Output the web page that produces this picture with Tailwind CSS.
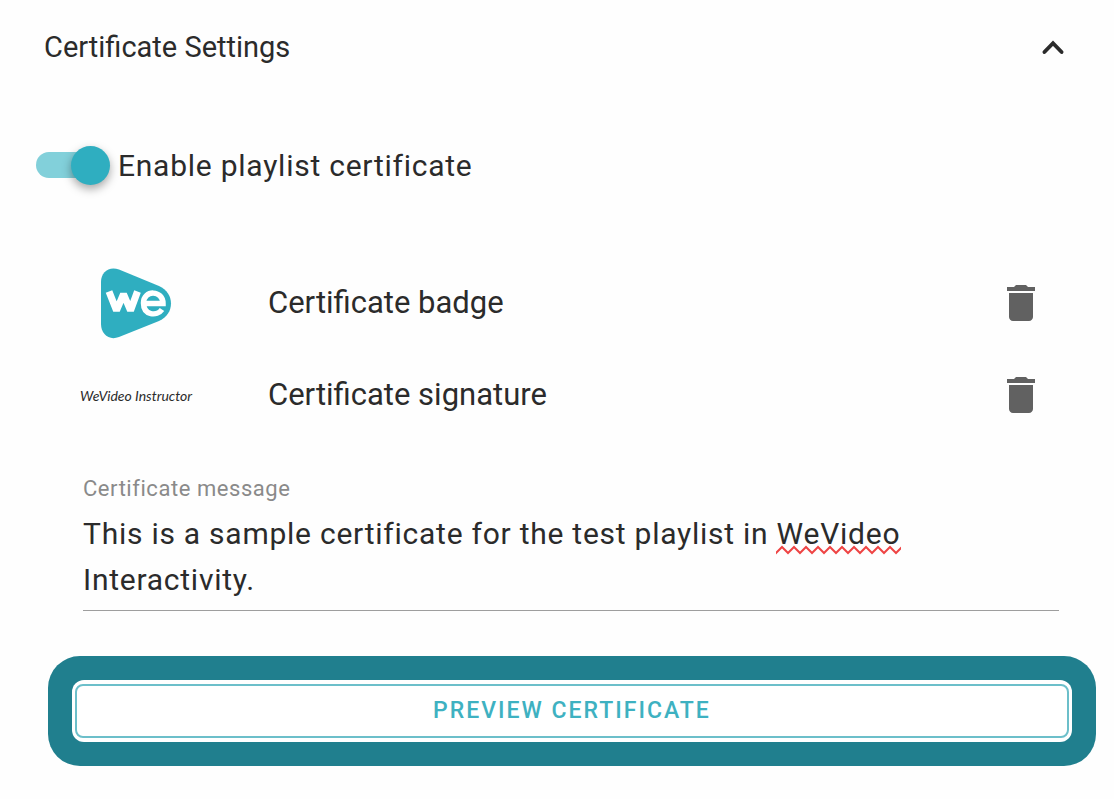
<!DOCTYPE html>
<html lang="en">

<head>
    <meta charset="UTF-8">
    <meta name="viewport" content="width=device-width, initial-scale=1.0">
    <title>Certificate Settings</title>
    <script src="https://cdn.jsdelivr.net/npm/@tailwindcss/browser@4"></script>
</head>

<body class="bg-[#fefefe] font-['Roboto',sans-serif] text-[#2b2b2b]">
    <main class="w-full">
        <!-- Panel header -->
        <header class="flex h-24 items-center justify-between pl-11 pr-10">
            <h1 class="text-[29px]">Certificate Settings</h1>
            <button type="button" aria-label="Collapse" aria-expanded="true">
                <svg class="size-[42px]" viewBox="0 0 24 24" fill="none" stroke="currentColor" stroke-width="2.2" stroke-linecap="round">
                    <path d="M7.100 14.300 12 9.300l4.900 5" />
                </svg>
            </button>
        </header>

        <!-- Toggle -->
        <div class="mt-[49px] flex h-10 items-center gap-2 pl-9">
            <input id="enable" type="checkbox" role="switch" checked
                class="relative h-[26px] w-[74px] appearance-none before:absolute before:inset-y-0 before:left-0 before:w-14 before:rounded-full before:bg-[#82d0da] after:absolute after:-top-[6px] after:right-0 after:size-[39px] after:rounded-full after:bg-[#2faec0] after:shadow-[0_4px_10px_rgba(0,0,0,0.35)]">
            <label for="enable" class="text-[30px] tracking-wide">Enable playlist certificate</label>
        </div>

        <!-- Uploaded images -->
        <ul class="mt-[72px] pl-20 pr-[69px]">
            <li class="flex h-[92px] items-center">
                <div class="flex w-[188px] pl-5">
                    <svg class="size-[72px]" viewBox="0 0 72 72" role="img" aria-label="WeVideo badge">
                        <path fill="#2faec0" d="M1 15C1 5 9-1 19 2.500L59 19C75 26 75 47 59 54L19 70C9 74 1 67 1 57Z" />
                        <path fill="none" stroke="#fff" stroke-width="7" stroke-linejoin="bevel" d="M9 24.500 16.500 43.500 23.500 27 30.500 43.500 37.500 24.500" />
                        <path fill="none" stroke="#fff" stroke-width="5.500" d="M43 36.500H63C63 23 43.500 22.500 43.500 36C43.500 48.500 57 49.500 62 42.500" />
                    </svg>
                </div>
                <span class="flex-1 text-[31px]">Certificate badge</span>
                <button type="button" aria-label="Delete badge">
                    <svg class="size-12 fill-[#616161]" viewBox="0 0 24 24">
                        <path d="M6 19c0 1.100.9 2 2 2h8c1.100 0 2-.9 2-2V7H6v12zM19 4h-3.500l-1-1h-5l-1 1H5v2h14V4z" />
                    </svg>
                </button>
            </li>
            <li class="flex h-[92px] items-center">
                <span class="w-[188px] font-['Lato',cursive] text-[14px] italic">WeVideo Instructor</span>
                <span class="flex-1 text-[31px]">Certificate signature</span>
                <button type="button" aria-label="Delete signature">
                    <svg class="size-12 fill-[#616161]" viewBox="0 0 24 24">
                        <path d="M6 19c0 1.100.9 2 2 2h8c1.100 0 2-.9 2-2V7H6v12zM19 4h-3.500l-1-1h-5l-1 1H5v2h14V4z" />
                    </svg>
                </button>
            </li>
        </ul>

        <!-- Message -->
        <div class="relative mt-8 flex flex-col pl-[83px] pr-[55px]">
            <label for="message" class="text-[22px] leading-8 tracking-wide text-[#8a8a8a]">Certificate message</label>
            <textarea id="message" rows="2" spellcheck="false"
                class="mt-[6px] h-[100px] resize-none overflow-hidden border-b border-[#9e9e9e] text-[30px] leading-[46px] tracking-wide outline-none">This is a sample certificate for the test playlist in WeVideo Interactivity.</textarea>
            <!-- spelling mark under "WeVideo" -->
            <svg class="pointer-events-none absolute left-[776px] top-[72px] h-[10px] w-[125px]" fill="none" stroke="#ee4444" stroke-width="2" aria-hidden="true">
                <defs>
                    <pattern id="wave" width="12" height="10" patternUnits="userSpaceOnUse">
                        <path d="M-6 2 0 8 6 2 12 8 18 2" />
                    </pattern>
                </defs>
                <rect width="125" height="10" fill="url(#wave)" stroke="none" />
            </svg>
        </div>

        <!-- Preview -->
        <div class="ml-12 mr-[18px] mt-[45px] rounded-[32px] bg-[#207f8e] px-6 py-6">
            <div class="rounded-[12px] bg-white px-[3px] py-1">
                <button type="button" class="block h-[54px] w-full rounded-[8px] border-2 border-[#6cbfca] text-[23px] font-medium tracking-[2px] text-[#3eb1c1]">PREVIEW CERTIFICATE</button>
            </div>
        </div>
    </main>
</body>

</html>
